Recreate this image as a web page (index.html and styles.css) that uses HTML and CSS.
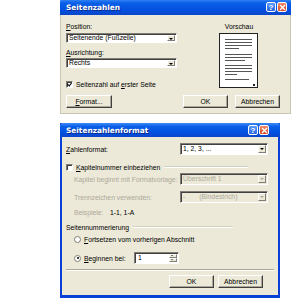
FILE: index.html
```html
<!DOCTYPE html>
<html lang="de">
<head>
    <meta charset="UTF-8">
    <title>Seitenzahlen</title>
    <link rel="stylesheet" href="styles.css">
</head>
<body>
<div class="desk">

    <!-- Dialog: Seitenzahlen -->
    <div class="window win-pages">
        <div class="titlebar">
            <span class="title">Seitenzahlen</span>
            <span class="tb-btn help">?</span>
            <span class="tb-btn close">
                <svg width="7" height="7" viewBox="0 0 7 7"><path d="M1 1L6 6M6 1L1 6" stroke="#fff" stroke-width="1.4"/></svg>
            </span>
        </div>
        <div class="client">
            <div class="cols">
                <div class="col-left">
                    <div class="lbl first"><u>P</u>osition:</div>
                    <div class="select">Seitenende (Fußzeile)<span class="arrow"></span></div>
                    <div class="lbl"><u>A</u>usrichtung:</div>
                    <div class="select">Rechts<span class="arrow"></span></div>
                    <div class="check"><span class="box on"></span><span>Seitenzahl auf <u>e</u>rster Seite</span></div>
                </div>
                <div class="col-right">
                    <div class="preview-lbl">Vorschau</div>
                    <svg class="preview" width="40" height="56" viewBox="0 0 40 56">
                        <rect x="0.5" y="0.5" width="38" height="54" fill="#fff" stroke="#222"/>
                        <g stroke="#555" stroke-width="1">
                            <path d="M6 6.5H33M6 9.5H33M6 12.5H33M6 15.5H20"/>
                            <path d="M6 21.5H33M6 24.5H33M6 27.5H26"/>
                            <path d="M6 32.5H33M6 35.5H33M6 38.5H33M6 41.5H18"/>
                            <path d="M6 46.5H30"/>
                        </g>
                        <rect x="34" y="51" width="2" height="2" fill="#222"/>
                    </svg>
                </div>
            </div>
            <div class="btn-row">
                <button class="btn btn-wide"><u>F</u>ormat...</button>
                <span class="spacer"></span>
                <button class="btn">OK</button>
                <button class="btn">Abbrechen</button>
            </div>
        </div>
    </div>

    <!-- Dialog: Seitenzahlenformat -->
    <div class="window win-format">
        <div class="titlebar">
            <span class="title">Seitenzahlenformat</span>
            <span class="tb-btn help">?</span>
            <span class="tb-btn close">
                <svg width="7" height="7" viewBox="0 0 7 7"><path d="M1 1L6 6M6 1L1 6" stroke="#fff" stroke-width="1.4"/></svg>
            </span>
        </div>
        <div class="client">
            <div class="form-row first">
                <span class="lbl"><u>Z</u>ahlenformat:</span>
                <div class="select">1, 2, 3, ...<span class="arrow"></span></div>
            </div>
            <div class="group-head chapter">
                <span class="check"><span class="box"></span><span><u>K</u>apitelnummer einbeziehen</span></span>
                <span class="rule"></span>
            </div>
            <div class="form-row indent style-row">
                <span class="lbl off">Kapitel beginnt mit Formatvorlage:</span>
                <div class="select disabled">Überschrift 1<span class="arrow"></span></div>
            </div>
            <div class="form-row indent sep-row">
                <span class="lbl off">Trennzeichen verwenden:</span>
                <div class="select disabled"><span class="dash">-</span>(Bindestrich)<span class="arrow"></span></div>
            </div>
            <div class="example indent">
                <span class="lbl off">Beispiele:</span>
                <span class="example-val">1-1, 1-A</span>
            </div>
            <div class="group-head numbering">
                <span class="lbl">Seitennummerierung</span>
                <span class="rule"></span>
            </div>
            <div class="radio-row indent">
                <span class="radio"></span><span><u>F</u>ortsetzen vom vorherigen Abschnitt</span>
            </div>
            <div class="radio-row indent start">
                <span class="radio on"></span><span class="radio-lbl"><u>B</u>eginnen bei:</span>
                <div class="spin">1<span class="spin-btns"><span class="up"></span><span class="down"></span></span></div>
            </div>
            <div class="sep"></div>
            <div class="btn-row end">
                <button class="btn">OK</button>
                <button class="btn">Abbrechen</button>
            </div>
        </div>
    </div>

</div>
</body>
</html>
```

FILE: styles.css
```css
body {
    margin: 0;
    background: #fff;
    font-family: "Liberation Sans", Arial, sans-serif;
    font-size: 6.8px;
    color: #000;
}
.desk {
    position: relative;
    width: 300px;
    height: 299px;
    overflow: hidden;
}
.window {
    position: absolute;
    display: flex;
    flex-direction: column;
    background: #ece9d8;
    border: 2px solid #0a3fd8;
    border-top: none;
}
.win-pages {
    left: 60px;
    top: -1px;
    width: 229px;
    border: 1px solid #c9c5b2;
    border-top: none;
}
.win-format {
    left: 60px;
    top: 123px;
    width: 216px;
    border-bottom-width: 3px;
}
.titlebar {
    height: 14px;
    margin: 0 -2px;
    padding: 0 11px 0 6px;
    display: flex;
    align-items: center;
    gap: 1px;
    background: linear-gradient(#3d8bf5 0%, #0a5fe8 25%, #0250df 70%, #0a47c9 100%);
    border-radius: 3px 3px 0 0;
}
.win-pages .titlebar {
    height: 16px;
    margin: 0 -1px;
    padding-right: 4px;
}
.title {
    flex: 1;
    color: #fff;
    font-family: "DejaVu Sans", sans-serif;
    font-weight: bold;
    font-size: 7.4px;
    text-shadow: 1px 1px 0 #0a2a8a;
}
.tb-btn {
    width: 10px;
    height: 10px;
    border: 1px solid #fff;
    border-radius: 2px;
    box-sizing: border-box;
    display: flex;
    align-items: center;
    justify-content: center;
    color: #fff;
    font-weight: bold;
    font-size: 8px;
}
.help {
    background: linear-gradient(#5a9cff, #2863e0);
}
.close {
    background: linear-gradient(#f08a6a, #d6421c);
}
.client {
    display: flex;
    flex-direction: column;
    padding: 0 4px;
}
.win-pages .client {
    padding: 0 5px;
}
.cols {
    display: flex;
}
.col-left {
    width: 111px;
}
.col-right {
    width: 40px;
    margin-left: 42px;
    display: flex;
    flex-direction: column;
    align-items: center;
}
.preview-lbl {
    margin-top: 7px;
    height: 10px;
    line-height: 10px;
    margin-bottom: 1px;
}
.lbl {
    white-space: nowrap;
}
.col-left .lbl {
    height: 10px;
    line-height: 10px;
    margin-top: 5px;
}
.col-left .lbl.first {
    margin-top: 7px;
}
.col-left .lbl + .select {
    margin-top: 1px;
}
.col-left .lbl + .select + .lbl + .select {
    margin-top: 0;
}
.select {
    position: relative;
    height: 10px;
    box-sizing: border-box;
    padding: 0 12px 0 2px;
    line-height: 8px;
    background: #fff;
    border: 1px solid;
    border-color: #7f7d74 #fff #fff #7f7d74;
    box-shadow: inset 1px 1px 0 #404040;
    white-space: nowrap;
    overflow: hidden;
}
.arrow {
    position: absolute;
    right: 1px;
    top: 1px;
    bottom: 1px;
    width: 8px;
    background: #ece9d8;
    border: 1px solid;
    border-color: #fff #7f7d74 #7f7d74 #fff;
    box-sizing: border-box;
}
.arrow::after {
    content: "";
    position: absolute;
    left: 1px;
    top: 2px;
    border: 2px solid transparent;
    border-top: 2px solid #000;
}
.select.disabled {
    background: #ece9d8;
    color: #aca899;
}
.select.disabled .arrow::after {
    border-top-color: #aca899;
}
.dash {
    margin-right: 14px;
}
.check {
    display: flex;
    align-items: center;
    gap: 3px;
    height: 10px;
    white-space: nowrap;
}
.box {
    width: 7px;
    height: 7px;
    box-sizing: border-box;
    background: #fff;
    border: 1px solid;
    border-color: #7f7d74 #fff #fff #7f7d74;
    box-shadow: inset 1px 1px 0 #404040;
    position: relative;
}
.box.on::after {
    content: "";
    position: absolute;
    left: 1px;
    top: 0;
    width: 2px;
    height: 3px;
    border: solid #000;
    border-width: 0 1px 1px 0;
    transform: rotate(40deg);
}
.col-left .check {
    margin-top: 11px;
}
.btn-row {
    display: flex;
    gap: 7px;
    padding: 6px 5px 5px 0;
}
.spacer {
    flex: 1;
}
.btn {
    width: 45px;
    height: 13px;
    padding: 0;
    font: inherit;
    color: #000;
    background: #ece9d8;
    border: 1px solid;
    border-color: #fff #404040 #404040 #fff;
    box-shadow: inset -1px -1px 0 #aca899;
}
.btn-wide {
    width: 46px;
}

/* Seitenzahlenformat */
.form-row {
    display: flex;
    align-items: center;
    justify-content: space-between;
    height: 12px;
    margin-right: 6px;
}
.form-row.first {
    margin-top: 6px;
}
.form-row .select {
    width: 88px;
    height: 12px;
    line-height: 10px;
}
.indent {
    padding-left: 8px;
}
.style-row {
    margin-top: 1px;
}
.sep-row {
    margin-top: 6px;
}
.lbl.off {
    color: #aca899;
}
.group-head {
    display: flex;
    align-items: center;
    gap: 4px;
    height: 10px;
}
.group-head.chapter {
    margin-top: 7px;
    margin-right: 26px;
}
.group-head.numbering {
    margin-top: 5px;
    margin-right: 41px;
}
.rule {
    flex: 1;
    height: 0;
    border-top: 1px solid #d0d0bf;
    border-bottom: 1px solid #fff;
}
.example {
    display: flex;
    align-items: center;
    gap: 10px;
    height: 10px;
    margin-top: 4px;
}
.example .lbl {
    width: 26px;
}
.radio-row {
    display: flex;
    align-items: center;
    gap: 3px;
    height: 10px;
    margin-top: 2px;
    white-space: nowrap;
}
.radio-row.start {
    height: 12px;
    margin-top: 8px;
}
.radio {
    width: 7px;
    height: 7px;
    box-sizing: border-box;
    border-radius: 50%;
    background: #fff;
    border: 1px solid #7f7d74;
    position: relative;
}
.radio.on::after {
    content: "";
    position: absolute;
    left: 1.5px;
    top: 1.5px;
    width: 2px;
    height: 2px;
    border-radius: 50%;
    background: #000;
}
.radio-lbl {
    width: 47px;
}
.spin {
    position: relative;
    width: 45px;
    height: 12px;
    box-sizing: border-box;
    padding-left: 3px;
    line-height: 10px;
    background: #fff;
    border: 1px solid;
    border-color: #7f7d74 #fff #fff #7f7d74;
    box-shadow: inset 1px 1px 0 #404040;
}
.spin-btns {
    position: absolute;
    right: 1px;
    top: 1px;
    bottom: 1px;
    width: 8px;
    display: flex;
    flex-direction: column;
}
.spin-btns span {
    flex: 1;
    position: relative;
    background: #ece9d8;
    border: 1px solid;
    border-color: #fff #7f7d74 #7f7d74 #fff;
}
.spin-btns .up::after,
.spin-btns .down::after {
    content: "";
    position: absolute;
    left: 1px;
    border: 1.5px solid transparent;
}
.spin-btns .up::after {
    top: -1px;
    border-bottom: 1.5px solid #000;
}
.spin-btns .down::after {
    top: 0;
    border-top: 1.5px solid #000;
}
.sep {
    margin-top: 5px;
    border-top: 1px solid #aca899;
    border-bottom: 1px solid #fff;
}
.btn-row.end {
    justify-content: flex-end;
    gap: 4px;
    padding: 4px 11px 7px 0;
}
```
